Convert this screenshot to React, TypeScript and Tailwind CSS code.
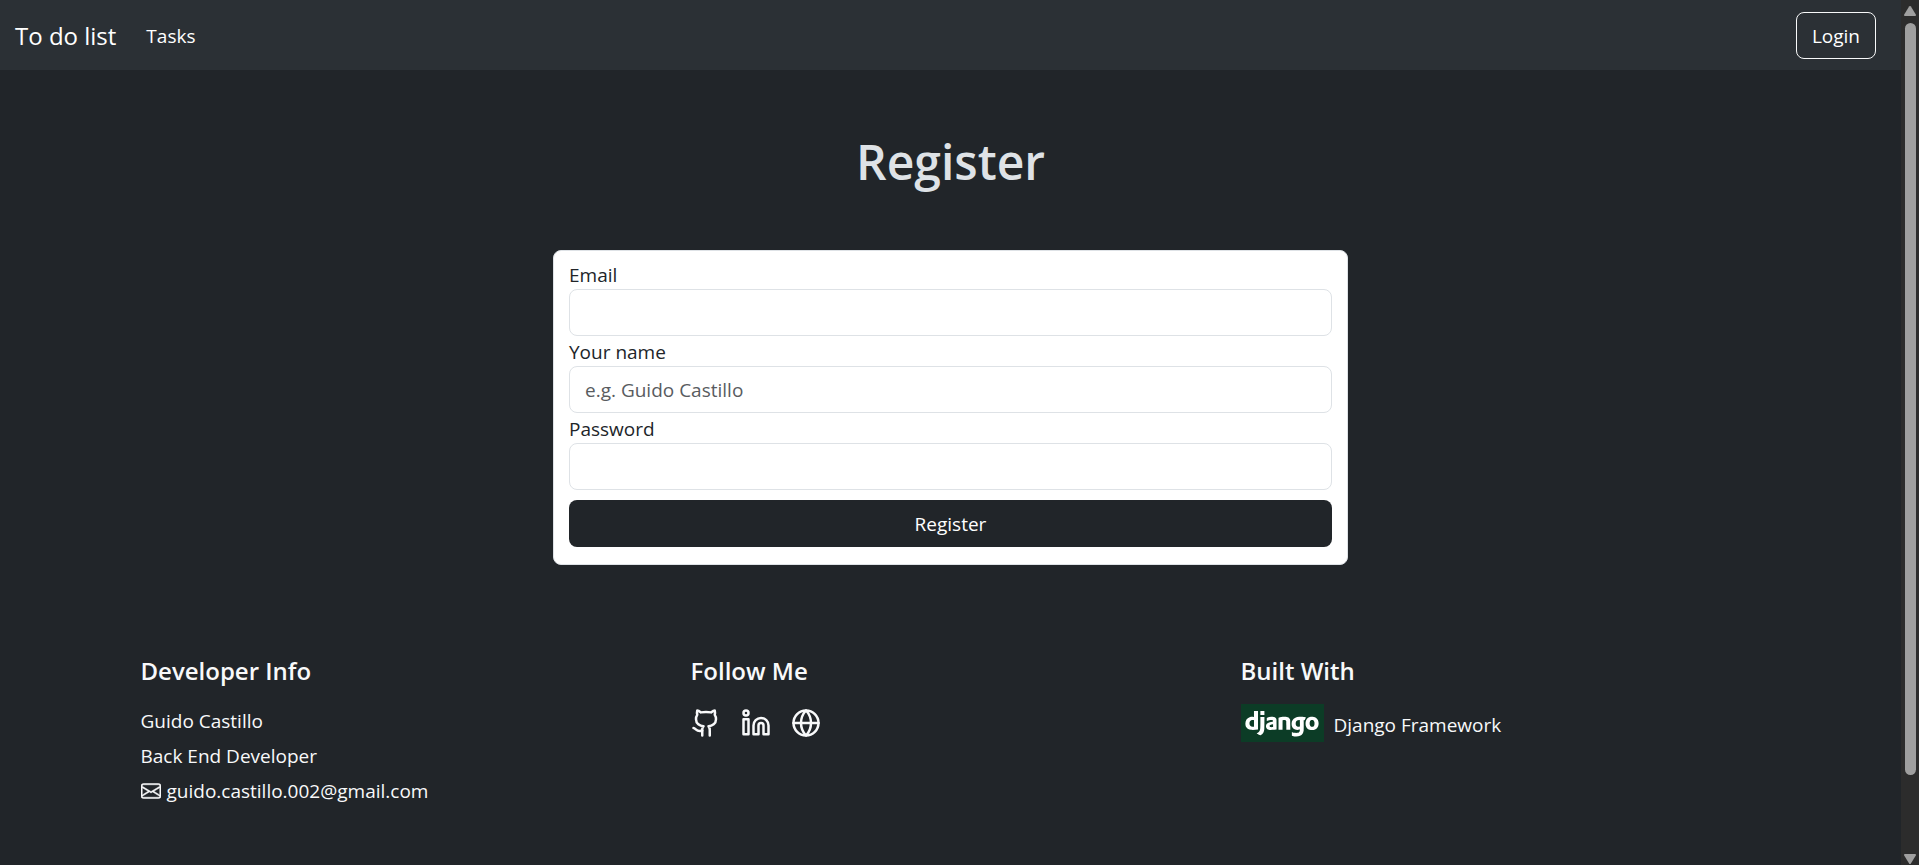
import { Github, Globe, Linkedin } from "lucide-react";
import { BsEnvelope } from "react-icons/bs";
import { DiDjango } from "react-icons/di";

type FieldProps = {
  id: string;
  label: string;
  type: string;
  placeholder?: string;
};

function Field({ id, label, type, placeholder }: FieldProps) {
  return (
    <div className="flex flex-col">
      <label htmlFor={id} className="pt-[2px] leading-7">
        {label}
      </label>
      <input
        id={id}
        type={type}
        placeholder={placeholder}
        className="h-[47px] w-full rounded-lg border border-[#dee2e6] bg-white px-[15px] placeholder:text-[#595c5f] placeholder:opacity-100"
      />
    </div>
  );
}

function Navbar() {
  return (
    <nav className="flex h-[70px] items-center bg-[#2b3035] pr-[25px] pl-[15px] text-white">
      <a href="#" className="pt-[2px] text-2xl">
        To do list
      </a>
      <a href="#tasks" className="ml-[30px] pt-[2px]">
        Tasks
      </a>
      <button type="button" className="ml-auto h-[47px] rounded-lg border border-[#f8f9fa] px-[15px] pt-[2px]">
        Login
      </button>
    </nav>
  );
}

function RegisterForm() {
  return (
    <form className="mx-auto w-[795px] max-w-full rounded-lg border border-[#dee2e6] bg-white px-[15px] pt-2 pb-[17px] text-[#212529]">
      <Field id="email" label="Email" type="email" />
      <Field id="name" label="Your name" type="text" placeholder="e.g. Guido Castillo" />
      <Field id="password" label="Password" type="password" />
      <button type="submit" className="mt-[10px] h-[47px] w-full rounded-lg bg-[#212529] pt-[2px] text-white">
        Register
      </button>
    </form>
  );
}

function Footer() {
  return (
    <footer className="mx-auto mt-[91px] grid w-full max-w-[1650px] grid-cols-3 pb-12 text-[#f8f9fa]">
      <section className="px-[15px]">
        <h2 className="mb-5 text-2xl leading-[30px] font-semibold">Developer Info</h2>
        <p className="mb-[5px] leading-[30px]">Guido Castillo</p>
        <p className="mb-[5px] leading-[30px]">Back End Developer</p>
        <a href="mailto:guido.castillo.002@gmail.com" className="flex items-center gap-[6px] leading-[30px]">
          <BsEnvelope size={20} strokeWidth={0.4} aria-hidden />
          guido.castillo.002@gmail.com
        </a>
      </section>
      <section className="px-[15px]">
        <h2 className="mb-[22px] text-2xl leading-[30px] font-semibold">Follow Me</h2>
        <div className="flex gap-5">
          <a href="#github" aria-label="GitHub">
            <Github size={30} />
          </a>
          <a href="#linkedin" aria-label="LinkedIn">
            <Linkedin size={30} />
          </a>
          <a href="#website" aria-label="Website">
            <Globe size={30} />
          </a>
        </div>
      </section>
      <section className="px-[15px]">
        <h2 className="mb-[18px] text-2xl leading-[30px] font-semibold">Built With</h2>
        <div className="flex items-center gap-[10px]">
          <span className="flex h-[38px] w-[83px] items-center justify-center overflow-hidden bg-[#0c3c26] text-white">
            <DiDjango size={74} className="shrink-0" aria-hidden />
          </span>
          <span className="pt-1">Django Framework</span>
        </div>
      </section>
    </footer>
  );
}

function ScrollTrack() {
  return (
    <div aria-hidden className="sticky top-0 flex h-screen w-[18px] shrink-0 flex-col items-center bg-[#2c2c2c] text-[#9f9f9f]">
      <svg viewBox="0 0 12 10" className="mt-[6px] h-[10px] w-3 shrink-0" fill="currentColor">
        <path d="M5.1.6a1.1 1.1 0 0 1 1.8 0l4.9 7.8c.4.8 0 1.6-.9 1.6H1.1c-.9 0-1.3-.8-.9-1.6z" />
      </svg>
      <div className="mt-[7px] mb-[79px] w-[11px] grow rounded-full bg-[#9f9f9f]" />
      <svg viewBox="0 0 12 10" className="mb-[1px] h-[10px] w-3 shrink-0 rotate-180" fill="currentColor">
        <path d="M5.1.6a1.1 1.1 0 0 1 1.8 0l4.9 7.8c.4.8 0 1.6-.9 1.6H1.1c-.9 0-1.3-.8-.9-1.6z" />
      </svg>
    </div>
  );
}

export default function App() {
  return (
    <div className="flex min-h-screen bg-[#212529] font-['Open_Sans','Noto_Sans',sans-serif] text-[19px]">
      <div className="min-w-0 grow">
        <Navbar />
        <main>
          <h1 className="pt-[62px] pb-[58px] text-center text-5xl leading-[60px] font-semibold text-[#dee2e6]">Register</h1>
          <RegisterForm />
        </main>
        <Footer />
      </div>
      <ScrollTrack />
    </div>
  );
}
